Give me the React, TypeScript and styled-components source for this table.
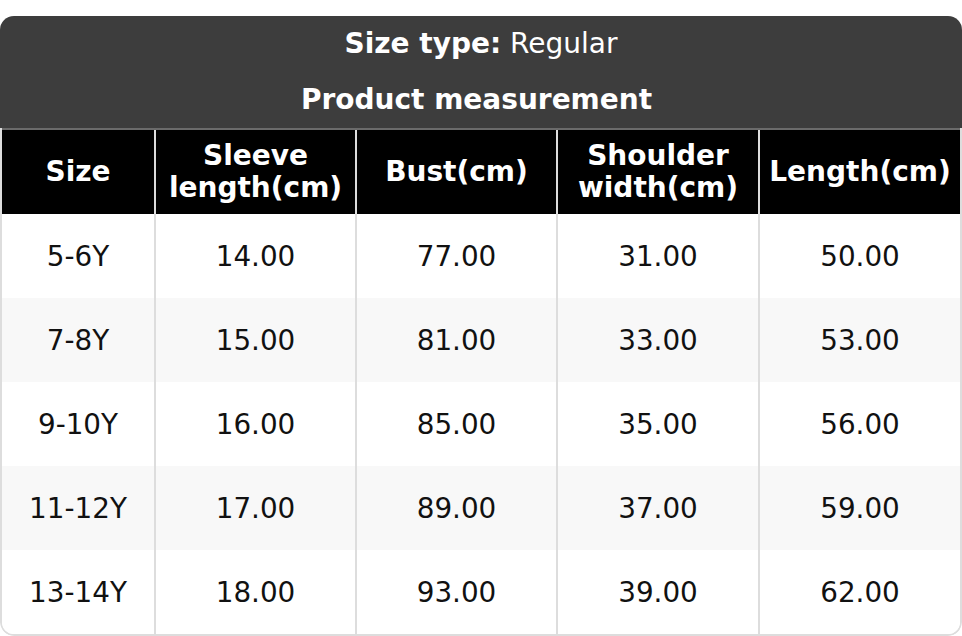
import React from "react";
import styled, { createGlobalStyle } from "styled-components";

const Global = createGlobalStyle`
  html, body { margin: 0; padding: 0; background: #ffffff; }
  body { font-family: "DejaVu Sans", "Liberation Sans", sans-serif; }
  * { box-sizing: border-box; }
`;

const Card = styled.div`
  margin-top: 16px;
  width: 962px;
  border-radius: 14px;
  overflow: hidden;
  background: #ffffff;
`;

const Title = styled.div`
  background: #3d3d3d;
  color: #ffffff;
  text-align: center;
`;

const TitleLine = styled.div<{ $bold?: boolean }>`
  height: 56px;
  line-height: 55px;
  font-size: 28px;
  font-weight: ${(p) => (p.$bold ? 700 : 400)};
  padding-right: ${(p) => (p.$bold ? "9px" : "0")};
`;

const Strong = styled.span`
  font-weight: 700;
`;

const Table = styled.div`
  border-left: 2px solid #dddddd;
  border-right: 2px solid #dddddd;
  border-bottom: 2px solid #dddddd;
  border-radius: 0 0 14px 14px;
  overflow: hidden;
`;

const Row = styled.div<{ $head?: boolean; $alt?: boolean }>`
  display: grid;
  grid-template-columns: 152px 201px 201px 202px 1fr;
  height: ${(p) => (p.$head ? "86px" : "84px")};
  background: ${(p) => (p.$head ? "#000000" : p.$alt ? "#f8f8f8" : "#ffffff")};
  border-top: ${(p) => (p.$head ? "2px solid #6b6b6b" : "none")};
  color: ${(p) => (p.$head ? "#ffffff" : "#111111")};
`;

const Cell = styled.div<{ $head?: boolean }>`
  display: flex;
  align-items: center;
  justify-content: center;
  text-align: center;
  font-size: ${(p) => (p.$head ? "28px" : "27.8px")};
  font-weight: ${(p) => (p.$head ? 700 : 400)};
  line-height: 32px;
  padding-top: ${(p) => (p.$head ? "0" : "1px")};
  & + & {
    border-left: 2px solid ${(p) => (p.$head ? "#666666" : "#dddddd")};
  }
`;

const headers = ["Size", "Sleeve\nlength(cm)", "Bust(cm)", "Shoulder\nwidth(cm)", "Length(cm)"];
const rows = [
  ["5-6Y", "14.00", "77.00", "31.00", "50.00"],
  ["7-8Y", "15.00", "81.00", "33.00", "53.00"],
  ["9-10Y", "16.00", "85.00", "35.00", "56.00"],
  ["11-12Y", "17.00", "89.00", "37.00", "59.00"],
  ["13-14Y", "18.00", "93.00", "39.00", "62.00"],
];

export default function App() {
  return (
    <>
      <Global />
      <Card>
        <Title>
          <TitleLine>
            <Strong>Size type:</Strong> Regular
          </TitleLine>
          <TitleLine $bold>Product measurement</TitleLine>
        </Title>
        <Table>
          <Row $head>
            {headers.map((h) => (
              <Cell $head key={h}>
                <span>
                  {h.split("\n").map((l, i) => (
                    <React.Fragment key={i}>
                      {i > 0 && <br />}
                      {l}
                    </React.Fragment>
                  ))}
                </span>
              </Cell>
            ))}
          </Row>
          {rows.map((r, i) => (
            <Row key={r[0]} $alt={i % 2 === 1}>
              {r.map((c, j) => (
                <Cell key={j}>{c}</Cell>
              ))}
            </Row>
          ))}
        </Table>
      </Card>
    </>
  );
}
